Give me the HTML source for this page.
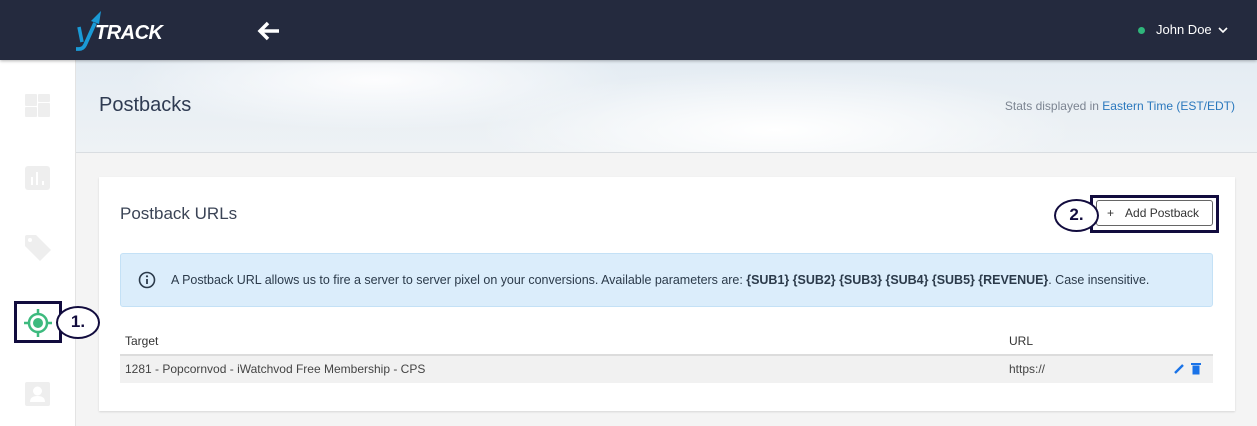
<!DOCTYPE html>
<html><head><meta charset="utf-8"><style>
*{box-sizing:border-box;margin:0;padding:0}
body{width:1257px;height:426px;overflow:hidden;font-family:"Liberation Sans",sans-serif;background:#f4f4f4;position:relative;color:#333}
.hdr{position:absolute;left:0;top:0;width:1257px;height:60px;background:#242a3e;box-shadow:0 1px 3px rgba(0,0,0,.3);z-index:2}
.side{position:absolute;left:0;top:60px;width:76px;height:366px;background:#fff;border-right:1px solid #e3e3e3}
.banner{position:absolute;left:76px;top:60px;width:1181px;height:93px;background:radial-gradient(ellipse 300px 60px at 700px 70px,#fff 0%,rgba(255,255,255,0) 100%),radial-gradient(ellipse 250px 50px at 300px 20px,#fdfdfe 0%,rgba(255,255,255,0) 100%),linear-gradient(180deg,#e4ecf3,#eef2f5);border-bottom:1px solid #d9dde1}
.card{position:absolute;left:99px;top:177px;width:1136px;height:234px;background:#fff;box-shadow:0 1px 2px rgba(0,0,0,.12)}
.ic{position:absolute;background:#eeeeee;border-radius:3px}
</style></head><body>
<div class="hdr">
 <div style="position:absolute;left:74px;top:9px;width:100px;height:42px">
  <svg width="30" height="42" style="position:absolute;left:0;top:0"><path d="M5 18 L8 33" stroke="#1a9ad6" stroke-width="3.5" fill="none"/><path d="M21 14 L11 36 Q9 40 5 40 L2 40" stroke="#1a9ad6" stroke-width="3.8" fill="none"/><path d="M17 12 L27 2 L25 15 Z" fill="#1a9ad6"/></svg>
  <span style="position:absolute;left:21px;top:13px;color:#fff;font-weight:bold;font-style:italic;font-size:20px;letter-spacing:-.5px">TRACK</span>
 </div>
 <svg width="24" height="20" style="position:absolute;left:257px;top:21px"><path d="M22 10 H4 M11 2 L3 10 L11 18" stroke="#fff" stroke-width="3.5" fill="none"/></svg>
 <div style="position:absolute;left:1138px;top:27px;width:7px;height:7px;border-radius:50%;background:#2fb67b"></div>
 <span style="position:absolute;left:1156px;top:22px;color:#fff;font-size:13px">John Doe</span>
 <svg width="10" height="8" style="position:absolute;left:1218px;top:26px"><path d="M1 2 L5 6 L9 2" stroke="#fff" stroke-width="1.6" fill="none"/></svg>
</div>
<div class="side">
 <div class="ic" style="left:25px;top:34px;width:12px;height:12px;border-radius:1px"></div>
 <div class="ic" style="left:38px;top:34px;width:12px;height:8px;border-radius:1px"></div>
 <div class="ic" style="left:25px;top:47px;width:12px;height:10px;border-radius:1px"></div>
 <div class="ic" style="left:38px;top:43px;width:12px;height:14px;border-radius:1px"></div>
 <div class="ic" style="left:25px;top:106px;width:25px;height:24px"></div>
 <div style="position:absolute;left:31px;top:117px;width:2px;height:8px;background:#fff"></div>
 <div style="position:absolute;left:36px;top:112px;width:2px;height:13px;background:#fff"></div>
 <div style="position:absolute;left:42px;top:121px;width:2px;height:4px;background:#fff"></div>
 <svg width="30" height="30" style="position:absolute;left:23px;top:174px"><path d="M2 3 Q2 1 4 1 L13 1 L28 16 L17 27 L2 12 Z" fill="#eee"/><circle cx="7" cy="6" r="2" fill="#fff"/></svg>
 <div style="position:absolute;left:14px;top:241px;width:48px;height:42px;border:3px solid #120c3e"></div>
 <svg width="30" height="30" style="position:absolute;left:23px;top:248px"><circle cx="15" cy="15" r="9" stroke="#3dba7e" stroke-width="2.5" fill="none"/><circle cx="15" cy="15" r="5" fill="#3dba7e"/><path d="M15 1v5M15 24v5M1 15h5M24 15h5" stroke="#3dba7e" stroke-width="2.5"/></svg>
 <div style="position:absolute;left:25px;top:322px;width:25px;height:24px;background:#eee;border-radius:2px"></div>
 <svg width="25" height="24" style="position:absolute;left:25px;top:322px"><circle cx="12.5" cy="9" r="4.5" fill="#fff"/><path d="M5 20 Q5 14 12.5 14 Q20 14 20 20 Z" fill="#fff"/></svg>
</div>
<div style="position:absolute;left:56px;top:306px;width:44px;height:33px;border:2.5px solid #120c3e;border-radius:50%;background:#fff;z-index:3;font-weight:bold;font-size:17px;color:#120c3e;text-align:center;line-height:28px">1.</div>
<div class="banner">
 <span style="position:absolute;left:23px;top:34px;font-size:20px;color:#2f3b52">Postbacks</span>
 <span style="position:absolute;right:22px;top:39px;font-size:12px;color:#7b8491">Stats displayed in <span style="color:#2a78bd">Eastern Time (EST/EDT)</span></span>
</div>
<div class="card">
 <span style="position:absolute;left:21px;top:27px;font-size:17px;color:#3b4456">Postback URLs</span>
 <div style="position:absolute;left:955px;top:22px;width:45px;height:33px;border:2.5px solid #120c3e;border-radius:50%;background:#fff;font-weight:bold;font-size:17px;color:#120c3e;text-align:center;line-height:28px;z-index:2">2.</div>
 <div style="position:absolute;left:991px;top:18px;width:129px;height:38px;border:3px solid #120c3e;background:#fff"></div>
 <div style="position:absolute;left:997px;top:23px;width:117px;height:26px;border:1px solid #666;border-radius:3px;font-size:12px;color:#333;line-height:24px;padding-left:10px"><span style="margin-right:11px">+</span>Add Postback</div>
 <div style="position:absolute;left:21px;top:76px;width:1093px;height:54px;background:#dbedfb;border:1px solid #c4e1f6;border-radius:3px">
  <svg width="18" height="18" style="position:absolute;left:17px;top:17px"><circle cx="9" cy="9" r="7.5" stroke="#2b3a4a" stroke-width="1.6" fill="none"/><path d="M9 8v5" stroke="#2b3a4a" stroke-width="1.8"/><circle cx="9" cy="5.3" r="1.1" fill="#2b3a4a"/></svg>
  <span style="position:absolute;left:50px;top:19px;font-size:12.5px;color:#2b3a4a;letter-spacing:-.02px">A Postback URL allows us to fire a server to server pixel on your conversions. Available parameters are: <b>{SUB1} {SUB2} {SUB3} {SUB4} {SUB5} {REVENUE}</b>. Case insensitive.</span>
 </div>
 <span style="position:absolute;left:26px;top:157px;font-size:12px;color:#333">Target</span>
 <span style="position:absolute;left:910px;top:157px;font-size:12px;color:#333">URL</span>
 <div style="position:absolute;left:21px;top:177px;width:1093px;height:29px;background:#f1f1f1;border-top:2px solid #dcdcdc">
  <span style="position:absolute;left:5px;top:6px;font-size:12px;color:#444">1281 - Popcornvod - iWatchvod Free Membership - CPS</span>
  <span style="position:absolute;left:889px;top:6px;font-size:12px;color:#444">https://</span>
  <svg width="12" height="12" style="position:absolute;left:1053px;top:7px"><path d="M2 10 L10 2" stroke="#1a73e8" stroke-width="2.4"/></svg>
  <svg width="10" height="12" style="position:absolute;left:1071px;top:7px"><rect x="0" y="0" width="10" height="2" fill="#1a73e8"/><rect x="1.5" y="2.5" width="7" height="9" fill="#1a73e8"/></svg>
 </div>
</div>
</body></html>
